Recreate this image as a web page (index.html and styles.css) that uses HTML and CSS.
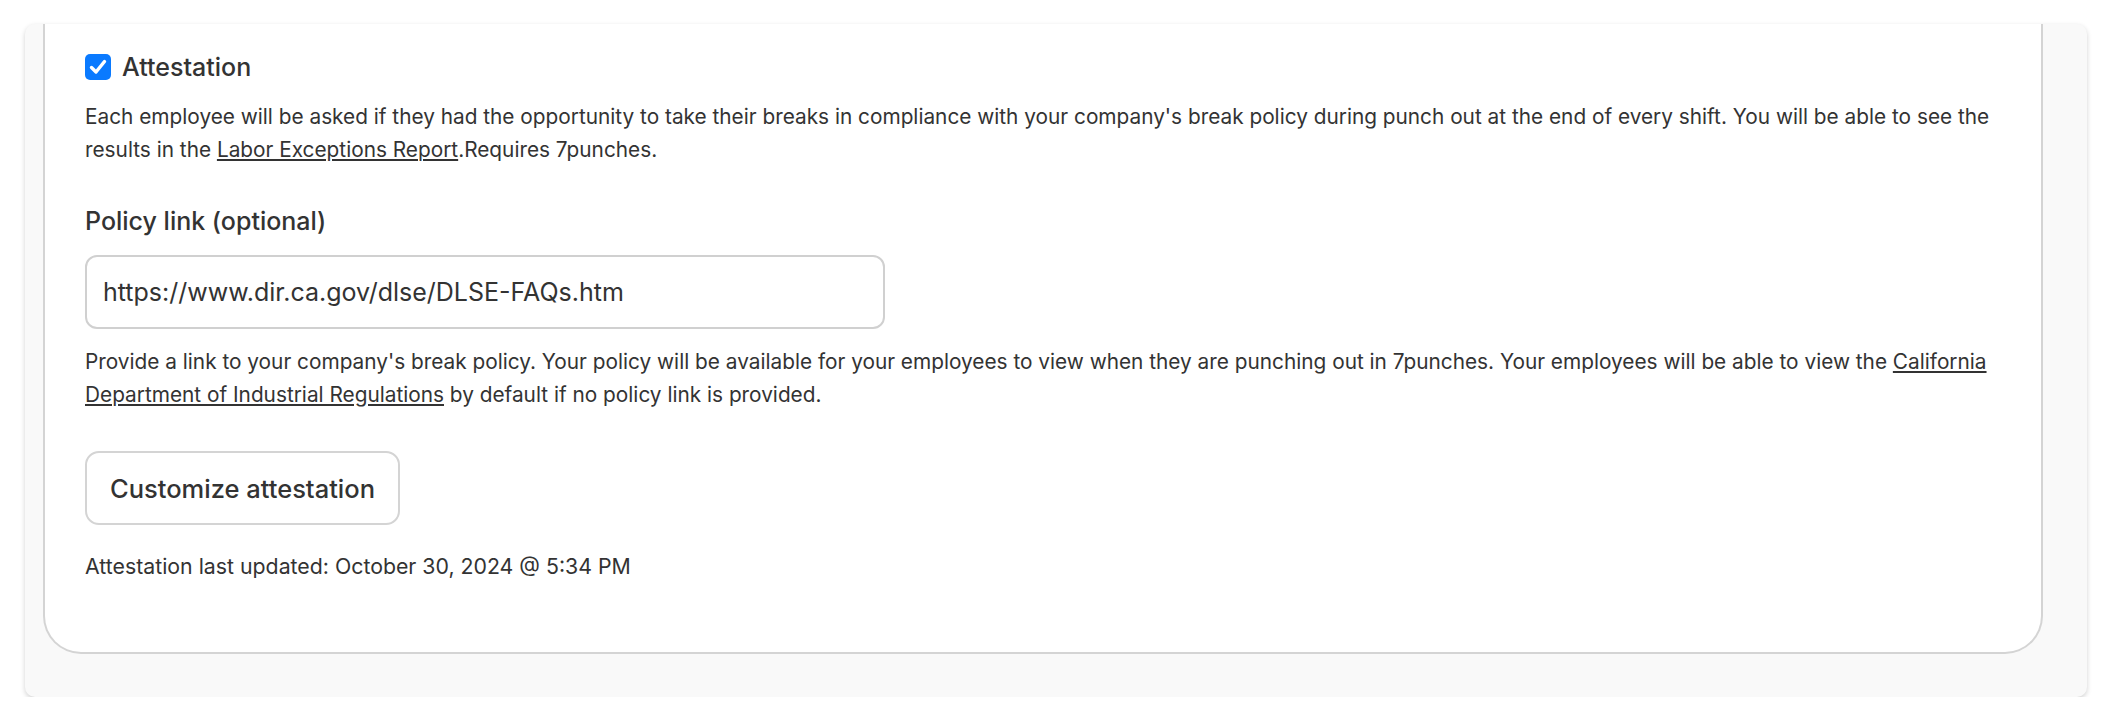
FILE: index.html
```html
<!DOCTYPE html>
<html lang="en">
<head>
<meta charset="utf-8">
<title>Attestation</title>
<link rel="stylesheet" href="styles.css">
</head>
<body>
<div class="outer">
  <div class="inner">
    <div class="check-row">
      <span class="checkbox" aria-checked="true" role="checkbox">
        <svg viewBox="0 0 26 26" width="26" height="26"><path d="M6.5 13.5 L11 18 L19.5 7.5" fill="none" stroke="#fff" stroke-width="3.4" stroke-linecap="round" stroke-linejoin="round"/></svg>
      </span>
      <span class="check-label">Attestation</span>
    </div>
    <p class="desc">Each employee will be asked if they had the opportunity to take their breaks in compliance with your company's break policy during punch out at the end of every shift. You will be able to see the results in the <a href="#">Labor Exceptions Report</a>.Requires 7punches.</p>
    <label class="field-label" for="policy">Policy link (optional)</label>
    <input class="text-input" id="policy" type="text" value="https://www.dir.ca.gov/dlse/DLSE-FAQs.htm">
    <p class="help">Provide a link to your company's break policy. Your policy will be available for your employees to view when they are punching out in 7punches. Your employees will be able to view the <a href="#">California Department of Industrial Regulations</a> by default if no policy link is provided.</p>
    <div class="actions"><button class="btn" type="button">Customize attestation</button></div>
    <p class="updated">Attestation last updated: October 30, 2024 @ 5:34 PM</p>
  </div>
</div>
</body>
</html>
```
FILE: styles.css
```css
html, body {
  margin: 0;
  padding: 0;
  background: #ffffff;
}
body {
  font-family: Inter, "Noto Sans", "Liberation Sans", sans-serif;
  color: #333333;
}
.outer {
  margin: 24px 0 0 25px;
  width: 2062px;
  height: 673px;
  box-sizing: border-box;
  padding: 0 44px 43px 18px;
  background: #f9f9f9;
  border-radius: 10px;
  box-shadow: 0 2px 5px rgba(0, 0, 0, 0.18);
  overflow: hidden;
  display: flex;
}
.inner {
  flex: 1;
  background: #ffffff;
  border: 2px solid #d4d4d4;
  border-top: 0;
  border-radius: 0 0 38px 38px;
  padding: 26px 40px 0 40px;
  display: flex;
  flex-direction: column;
  align-items: flex-start;
}
.check-row {
  display: flex;
  align-items: center;
  gap: 11px;
  height: 34px;
}
.checkbox {
  width: 26px;
  height: 26px;
  border-radius: 5px;
  background: #0a7aff;
  display: flex;
}
.check-label {
  font-size: 25px;
  font-weight: 500;
  line-height: 34px;
}
.desc, .help {
  margin: 16px 0 0 0;
  font-size: 20.8px;
  line-height: 33px;
}
a {
  color: #333333;
  text-decoration: underline;
  text-underline-offset: 2px;
}
.field-label {
  margin-top: 40px;
  font-size: 25px;
  font-weight: 500;
  line-height: 30px;
}
.text-input {
  margin-top: 19px;
  width: 800px;
  height: 74px;
  box-sizing: border-box;
  border: 2px solid #d0d0d0;
  border-radius: 12px;
  padding: 0 16px;
  font-family: Inter, "Noto Sans", "Liberation Sans", sans-serif;
  font-size: 25px;
  color: #333333;
  background: #ffffff;
  outline: none;
}
.help {
  margin-top: 16px;
}
.actions {
  margin-top: 40px;
}
.btn {
  width: 315px;
  height: 74px;
  box-sizing: border-box;
  border: 2px solid #d4d4d4;
  border-radius: 14px;
  background: #ffffff;
  font-family: Inter, "Noto Sans", "Liberation Sans", sans-serif;
  font-size: 25.5px;
  font-weight: 500;
  color: #333333;
  padding: 0;
}
.updated {
  margin: 26px 0 0 0;
  font-size: 21.3px;
  line-height: 30px;
}
```
